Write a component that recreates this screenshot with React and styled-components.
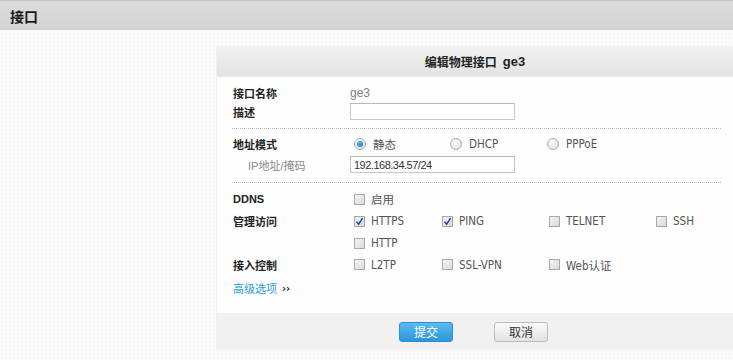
import React from 'react';
import styled, { createGlobalStyle } from 'styled-components';

const GlobalStyle = createGlobalStyle`
  body {
    margin: 0;
    font-family: "Liberation Sans", "Noto Sans CJK SC", sans-serif;
    font-size: 12px;
    color: #333;
    background-color: #fbfbfb;
    background-image: radial-gradient(#ececec 0.6px, transparent 0.8px);
    background-size: 4px 4px;
  }
`;

const TopBar = styled.div`
  height: 30px;
  box-sizing: border-box;
  border-top: 1px solid #c4c4c4;
  background: linear-gradient(to bottom, #dcdcdc, #d4d4d4);
  display: flex;
  align-items: center;
  padding-left: 10px;
  font-family: "Noto Sans CJK SC", sans-serif;
  font-weight: 700;
  font-size: 14px;
  color: #1a1a1a;
`;

const Page = styled.div`
  padding: 16px 0 0 216px;
  display: flex;
`;

const Panel = styled.div`
  flex: 1;
  background: rgba(255, 255, 255, 0.7);
  border-left: 1px solid #f0f0f0;
`;

const PanelHead = styled.div`
  height: 30px;
  display: flex;
  align-items: center;
  justify-content: center;
  background: linear-gradient(to bottom, #f2f2f2, #e3e3e3);
  border-bottom: 1px solid #e6e6e6;
  font-family: "Noto Sans CJK SC", sans-serif;
  font-weight: 700;
  font-size: 12px;
  color: #222;
  gap: 6px;
`;

const HeadLatin = styled.span`
  font-family: "Liberation Sans", sans-serif;
  font-size: 13px;
`;

const Body = styled.div`
  padding: 5px 12px 15px 15px;
`;

const Section = styled.div`
  padding-top: ${p => p.top || 0}px;
  padding-bottom: ${p => p.bottom || 0}px;
  border-bottom: ${p => (p.sep ? '1px dotted #b5b5b5' : 'none')};
`;

const Row = styled.div`
  display: flex;
  align-items: center;
  height: ${p => p.h || 22}px;
`;

const Label = styled.div`
  width: 118px;
  flex-shrink: 0;
  box-sizing: border-box;
  padding-left: ${p => (p.sub ? 16 : 1)}px;
  font-family: ${p => (p.latin ? '"Liberation Sans", "Noto Sans CJK SC"' : '"Noto Sans CJK SC"')}, sans-serif;
  font-weight: ${p => (p.sub ? 400 : 700)};
  font-size: 11px;
  color: ${p => (p.sub ? '#8a8a8a' : '#222')};
`;

const Value = styled.div`
  color: #808080;
  font-size: 12px;
`;

const Input = styled.input`
  width: 165px;
  height: 17px;
  box-sizing: border-box;
  border: 1px solid #c6c6c6;
  border-top-color: #b8b8b8;
  background: #fff;
  padding: 0 3px;
  font-family: "Liberation Sans", sans-serif;
  font-size: 11px;
  letter-spacing: -0.5px;
  color: #333;
  outline: none;
`;

const Options = styled.div`
  display: flex;
  padding-left: 4px;
`;

const Option = styled.label`
  width: ${p => p.w || 90}px;
  display: flex;
  align-items: center;
  gap: ${p => (p.radio ? 7 : 6)}px;
  font-family: "DejaVu Sans Condensed", "DejaVu Sans", "Noto Sans CJK SC", sans-serif;
  font-size: 11.5px;
  color: #555;
`;

const Box = styled.span`
  width: 11px;
  height: 11px;
  box-sizing: border-box;
  border: 1px solid #a9a9a9;
  background: linear-gradient(to bottom right, #f4f4f4, #d9d9d9);
  display: flex;
  align-items: center;
  justify-content: center;
`;

const Radio = styled.span`
  width: 12px;
  height: 12px;
  box-sizing: border-box;
  border-radius: 50%;
  border: 1px solid #b0b0b0;
  background: radial-gradient(circle at 40% 35%, #ffffff, #d6d6d6);
  display: flex;
  align-items: center;
  justify-content: center;
  &::after {
    content: '';
    display: ${p => (p.on ? 'block' : 'none')};
    width: 6px;
    height: 6px;
    border-radius: 50%;
    background: radial-gradient(circle at 40% 35%, #5ab8f0, #1568b8);
  }
`;

const Advanced = styled.div`
  display: flex;
  align-items: center;
  gap: 5px;
  height: 20px;
  margin-top: 3px;
  padding-left: 1px;
  font-family: "Noto Sans CJK SC", sans-serif;
  font-size: 11px;
  color: #2a9ad8;
`;

const Chevrons = styled.span`
  font-family: "DejaVu Sans", sans-serif;
  font-size: 10px;
  font-weight: 700;
  color: #222;
`;

const Footer = styled.div`
  height: 37px;
  background: #f1f1f1;
  display: flex;
  align-items: center;
  justify-content: center;
  gap: 41px;
  padding-right: 3px;
`;

const Button = styled.button`
  width: 54px;
  height: 20px;
  border-radius: 3px;
  font-family: "Noto Sans CJK SC", sans-serif;
  font-size: 12px;
  padding: 0;
  border: 1px solid ${p => (p.primary ? '#2b8fd3' : '#bcbcbc')};
  color: ${p => (p.primary ? '#fff' : '#333')};
  background: ${p => (p.primary
    ? 'linear-gradient(to bottom, #5bbcef, #2b96da)'
    : 'linear-gradient(to bottom, #fbfbfb, #e2e2e2)')};
`;

const Check = ({ on }) => (
  <Box>
    {on && (
      <svg width="9" height="9" viewBox="0 0 9 9">
        <path d="M1.5 4.6 L3.6 7.2 L7.6 1.2" fill="none" stroke="#2544a0" strokeWidth="1.5" />
      </svg>
    )}
  </Box>
);

export default function App() {
  return (
    <>
      <GlobalStyle />
      <TopBar>接口</TopBar>
      <Page>
        <Panel>
          <PanelHead>
            编辑物理接口<HeadLatin>ge3</HeadLatin>
          </PanelHead>
          <Body>
            <Section sep top={1} bottom={7}>
              <Row h={19}>
                <Label>接口名称</Label>
                <Value>ge3</Value>
              </Row>
              <Row h={19}>
                <Label>描述</Label>
                <Input />
              </Row>
            </Section>
            <Section sep top={4} bottom={7}>
              <Row h={21}>
                <Label>地址模式</Label>
                <Options>
                  <Option radio w={96}><Radio on />静态</Option>
                  <Option radio w={97}><Radio />DHCP</Option>
                  <Option radio w={90}><Radio />PPPoE</Option>
                </Options>
              </Row>
              <Row h={21}>
                <Label sub latin>IP地址/掩码</Label>
                <Input defaultValue="192.168.34.57/24" />
              </Row>
            </Section>
            <Section top={5}>
              <Row>
                <Label latin>DDNS</Label>
                <Options>
                  <Option><Check />启用</Option>
                </Options>
              </Row>
              <Row>
                <Label>管理访问</Label>
                <Options>
                  <Option w={88}><Check on />HTTPS</Option>
                  <Option w={107}><Check on />PING</Option>
                  <Option w={107}><Check />TELNET</Option>
                  <Option w={60}><Check />SSH</Option>
                </Options>
              </Row>
              <Row>
                <Label />
                <Options>
                  <Option w={88}><Check />HTTP</Option>
                </Options>
              </Row>
              <Row h={21}>
                <Label>接入控制</Label>
                <Options>
                  <Option w={88}><Check />L2TP</Option>
                  <Option w={107}><Check />SSL-VPN</Option>
                  <Option w={107}><Check />Web认证</Option>
                </Options>
              </Row>
              <Advanced>
                高级选项<Chevrons>››</Chevrons>
              </Advanced>
            </Section>
          </Body>
          <Footer>
            <Button primary>提交</Button>
            <Button>取消</Button>
          </Footer>
        </Panel>
      </Page>
    </>
  );
}
